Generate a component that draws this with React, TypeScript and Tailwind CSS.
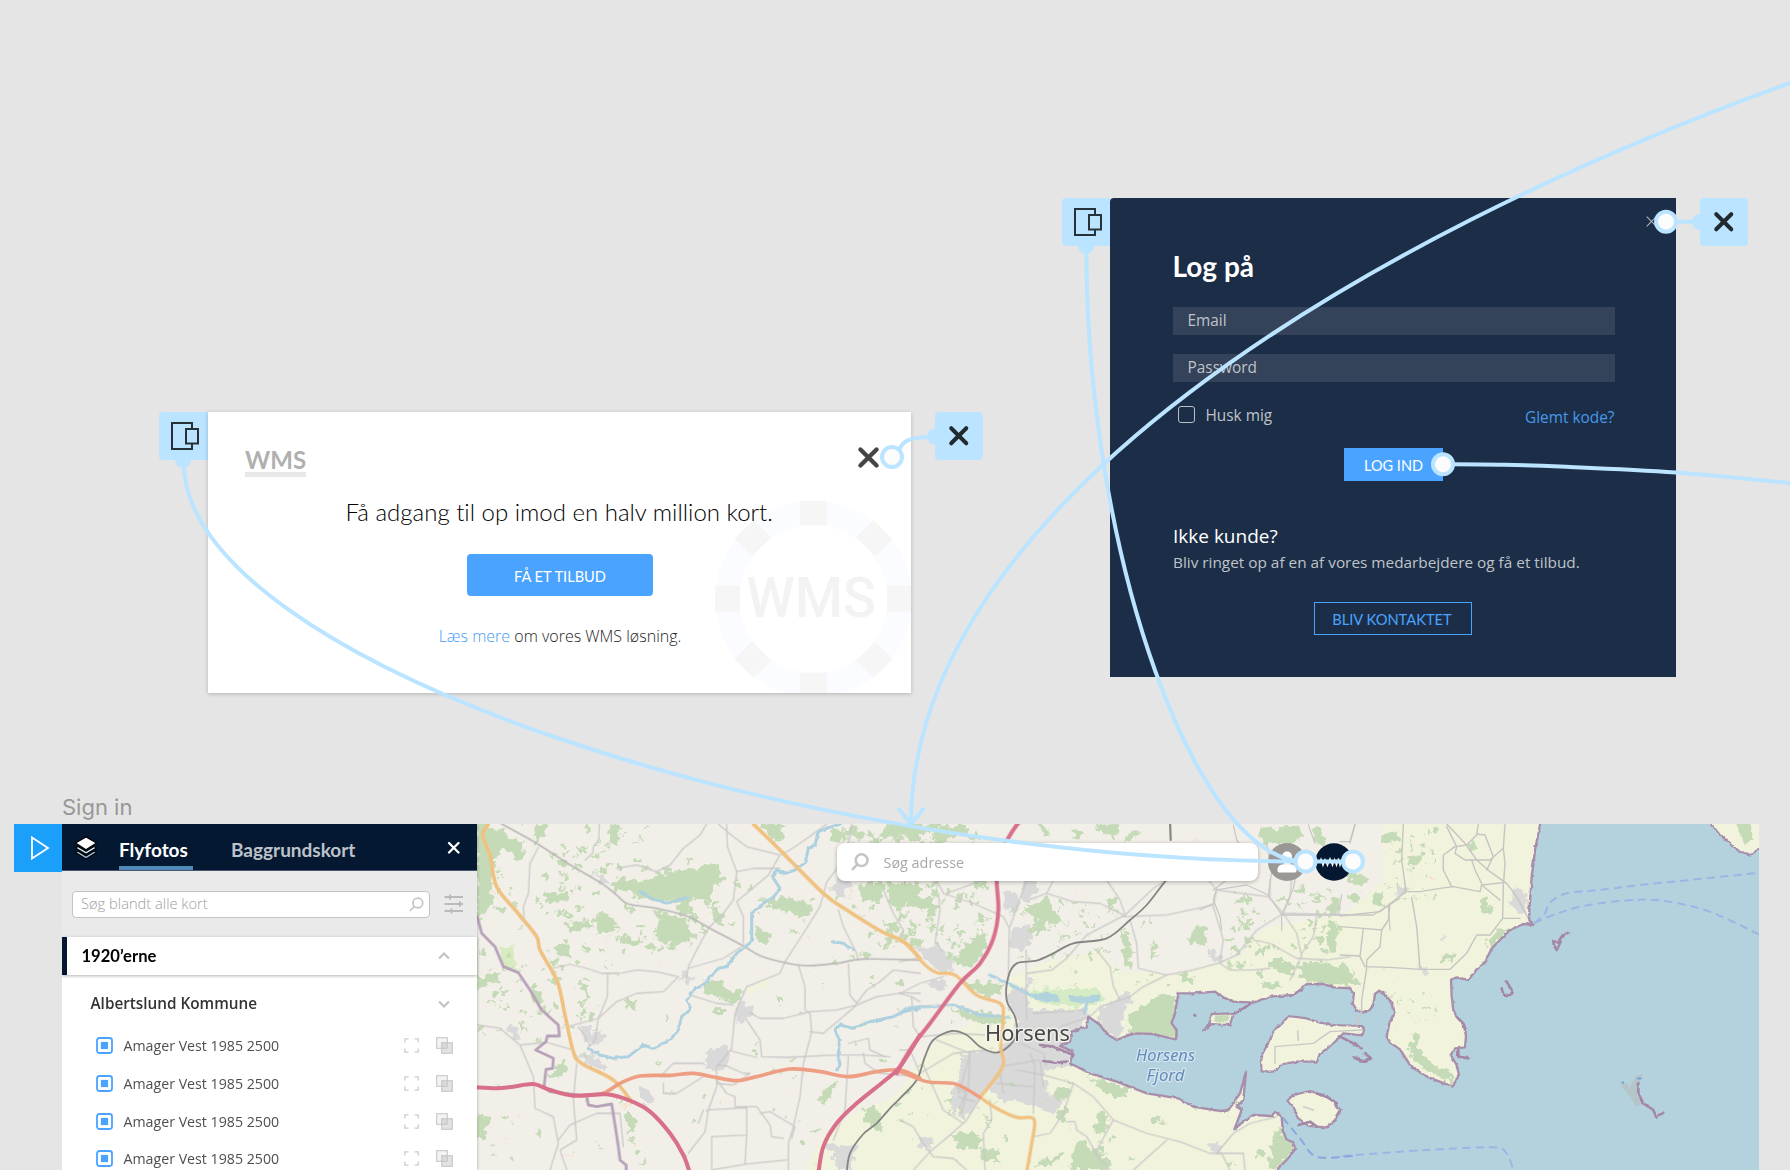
import React from "react";

type Pt = [number, number];

/** Parses "x,y x,y ..." into points. */
const pts = (s: string): Pt[] => s.trim().split(/\s+/).map((p) => p.split(",").map(Number) as Pt);

/** Smooth open curve through all the points. */
function curve(s: string): string {
  const p = pts(s);
  let d = `M${p[0][0]} ${p[0][1]}`;
  for (let i = 0; i < p.length - 1; i++) {
    const a = p[i - 1] ?? p[i];
    const b = p[i];
    const c = p[i + 1];
    const e = p[i + 2] ?? c;
    d += `C${b[0] + (c[0] - a[0]) / 6} ${b[1] + (c[1] - a[1]) / 6} ${c[0] - (e[0] - b[0]) / 6} ${c[1] - (e[1] - b[1]) / 6} ${c[0]} ${c[1]}`;
  }
  return d;
}

/* ---------- map data: three survey tiles, three units to a pixel ---------- */

const WEST = "translate(470 810) scale(.33333)";
const MID = "translate(900 880) scale(.33333)";
const EAST = "translate(1340 810) scale(.33333)";
const NORTH = "translate(1200 800) scale(.33333)";

const SEA =
  "-755,620 -720,645 -700,672 -670,690 -650,682 -620,670 -560,672 -530,680 -492,688 -490,660 -505,640 -495,610 -485,550 -440,550 -375,545 -350,562 -320,575 -260,578 -210,560 -140,555 -120,540 -100,522 -50,522 -20,532 30,535 42,550 38,580 50,600 65,607 85,605 100,585 105,552 118,542 140,560 158,580 163,608 148,640 140,680 150,697 180,718 212,768 260,800 338,830 357,795 350,765 332,735 345,715 375,712 378,680 372,645 350,620 340,600 335,560 333,510 350,502 385,510 410,478 435,458 455,415 480,390 510,360 550,342 580,345 568,330 568,300 572,250 575,200 582,150 585,120 605,20 1280,20 1280,1120 -215,1120 -190,1080 -160,1050 -132,1015 -145,995 -160,990 -172,960 -175,920 -195,905 -205,918 -260,915 -290,935 -317,958 -295,900 -310,890 -290,870 -282,785 -300,850 -335,900 -360,903 -440,890 -485,865 -580,850 -670,815 -750,790 -810,760 -800,725 -840,708 -810,695 -805,665 -760,650";

const FARM =
  "330,290 430,250 600,210 650,270 700,275 830,285 900,262 1030,225 1060,170 1100,140 1300,110 1340,100 1450,0 1450,-170 2580,-170 2580,880 -290,880 -250,800 -200,740 -110,690 0,640 60,540 120,470 220,430 310,420 320,340";

const ISLANDS_MID = [
  "1165,408 1220,415 1260,428 1300,435 1385,438 1392,450 1388,466 1330,460 1290,500 1260,520 1250,545 1190,545 1150,552 1120,575 1085,575 1083,545 1088,520 1105,490 1120,455 1145,432",
  "1162,662 1180,645 1230,633 1290,655 1322,690 1305,720 1280,742 1225,738 1195,715 1185,690",
  "935,402 1000,400 990,435 935,432 912,452 930,425",
];

const FOREST_WEST = [
  "22,42 55,42 70,75 100,85 135,100 130,125 95,120 75,160 60,250 75,260 50,300 30,330 22,330",
  "50,50 100,60 130,90 160,95 165,130 140,150 120,120 80,120 60,90",
  "200,42 230,42 222,80 205,100 190,90",
  "415,42 445,42 448,95 430,105 415,80",
  "430,215 470,205 510,215 560,195 640,180 750,165 750,200 765,210 730,235 720,270 665,265 662,300 650,315 625,308 622,272 560,275 510,262 470,240 430,240",
  "545,300 600,308 655,330 650,350 678,375 660,395 615,400 560,395 560,350 575,335",
  "385,310 410,315 437,330 430,370 405,365 375,375",
  "865,42 945,42 930,60 945,85 920,100 900,80",
  "730,505 760,520 768,540 820,545 805,580 745,565 697,550 705,520",
  "880,275 930,262 985,270 1025,285 1020,315 990,325 950,300 900,295",
  "855,345 875,360 900,370 890,400 860,395",
  "1160,225 1230,215 1245,235 1225,280 1200,270 1180,280 1170,250",
  "1250,215 1350,215 1350,300 1310,275 1285,310 1260,270",
  "255,770 285,750 292,785 262,805 240,795",
  "22,910 55,915 60,950 40,970 45,985 22,975",
  "1180,895 1215,885 1225,910 1240,970 1215,960 1185,930",
  "1040,870 1080,820 1110,810 1095,835 1065,885",
  "470,905 495,920 500,955 480,970 465,940",
  "22,500 60,490 90,490 80,510 40,530 22,540",
  "220,250 260,245 290,262 265,275 230,272",
  "250,410 290,400 310,440 290,445 260,430",
  "440,380 500,385 520,400 480,410 450,400",
  "1250,42 1350,42 1350,95 1310,80 1280,75 1230,90",
  "720,290 760,310 760,350 740,345",
  "190,530 215,545 220,590 240,620 215,600 190,570",
  "320,510 350,525 360,560 345,585 340,540",
  "1080,60 1120,60 1110,95 1080,90",
  "465,570 500,570 498,590 470,595",
  "720,600 770,590 765,605 725,608",
  "1350,160 1420,150 1500,140 1480,190 1400,200",
  "280,345 320,335 350,330 370,350 330,362 295,360",
  "1240,340 1275,335 1290,360 1250,370",
];

const FOREST_MID = [
  "370,100 400,70 440,50 465,85 470,110 490,125 440,135 420,165 400,155 410,115",
  "180,210 250,150 260,180 250,225 225,250 185,260 160,240",
  "190,310 250,305 310,310 305,345 250,345 210,330",
  "685,410 720,380 770,350 830,345 820,420 830,470 780,468 690,460",
  "660,140 680,160 695,210 695,270 670,250 665,180",
  "865,175 890,135 915,145 918,195 880,190",
  "1290,120 1310,130 1305,220 1285,215",
  "1190,250 1250,245 1345,270 1340,315 1280,310 1230,305 1200,290",
  "1110,240 1150,240 1190,260 1180,290 1150,280 1100,260",
  "455,640 490,620 515,630 500,655 460,655",
  "560,590 620,605 695,625 680,645 640,650 600,625",
  "590,695 625,700 615,755 580,750",
  "545,780 570,800 590,810 630,845 625,870 510,870 515,820",
  "155,765 200,752 245,775 230,805 180,808",
  "245,810 290,805 300,850 240,838",
  "1120,760 1140,745 1185,805 1130,870 1105,868",
  "940,405 992,405 982,428 940,428",
  "150,385 230,395 310,405 320,430 250,430 200,420",
  "470,700 500,680 510,700 480,730",
  "1070,810 1090,810 1090,835 1068,830",
  "400,860 440,835 480,830 450,855",
  "755,190 765,185 770,235 755,225",
  "830,285 860,278 885,300 860,308",
  "620,55 650,55 650,75 625,75",
  "-20,10 30,5 60,40 90,80 60,95 30,60 0,70",
  "60,60 100,50 120,90 90,105",
  "0,90 20,100 10,125 -10,120",
  "1080,315 1130,310 1150,325 1110,330",
];

const FOREST_NORTH = [
  "175,85 215,80 235,95 255,78 305,80 305,110 270,130 190,130 180,110",
  "335,80 365,85 380,130 360,145 345,115",
  "400,295 420,290 415,320 425,335 390,340 375,330",
  "460,280 480,290 470,305 448,305",
  "130,292 160,295 150,310 132,305",
  "430,210 470,215 505,240 480,260 440,245",
  "-800,75 -770,80 -700,72 -690,100 -740,110 -790,130",
  "-480,78 -460,78 -450,105 -470,110",
  "-320,75 -240,72 -240,90 -260,115 -300,95",
  "-210,95 -180,90 -195,115 -230,130",
  "-385,85 -365,90 -350,105 -375,115",
  "-700,110 -670,95 -650,110 -680,125",
];

const FOREST_EAST = [
  "125,70 180,68 180,95 130,98",
  "15,200 50,195 85,205 80,225 40,220",
  "440,410 445,385 480,355 515,350 490,375 465,410",
  "220,680 240,675 232,710 245,735 290,770 340,790 340,812 300,805 235,765 205,725",
  "95,250 130,250 130,290 100,285",
  "30,255 60,245 45,280 30,275",
  "420,270 440,265 445,290 465,290 440,312 425,305",
  "300,440 350,425 350,445 320,455 300,458",
  "385,100 405,95 408,120 390,118",
  "200,145 240,135 245,155 210,165",
  "8,450 35,490 60,520 20,530 0,500",
];

const URBAN_WEST = [
  "330,645 355,650 365,680 395,660 410,685 375,705 345,690",
  "100,655 125,645 150,670 145,690",
  "320,730 370,735 410,765 405,785 340,755",
  "715,720 760,705 780,720 770,770 740,790 705,775",
  "790,600 820,575 850,600 830,630 805,640",
  "625,500 650,485 670,510 655,525",
  "510,830 540,840 550,880 530,880 510,860",
  "1080,230 1115,190 1150,220 1110,265",
  "360,190 410,205 420,235 395,220",
  "1065,1000 1160,1010 1145,1080 1110,1080",
];

const URBAN_MID = [
  "330,330 380,320 385,390 560,390 570,420 520,455 480,480 530,520 500,560 430,570 440,640 500,650 460,700 380,670 300,660 270,620 240,660 190,720 160,690 155,640 180,600 180,520 290,510 340,470 350,420 325,380",
  "600,390 680,335 700,350 670,395 670,465 640,480 590,430",
  "370,0 410,0 412,40 380,65 360,50",
  "305,35 350,35 360,80 330,105 310,70",
  "335,150 390,130 400,185 370,210 330,200",
  "40,200 110,200 165,240 160,270 110,270 60,225",
  "80,310 130,295 140,325 100,330",
  "925,195 950,225 975,245 935,245",
  "55,770 95,775 90,815 60,800",
  "925,790 970,790 960,820 930,815",
  "385,285 402,290 400,320 380,315",
];

const URBAN_EAST = ["520,240 550,235 560,300 540,320 515,290", "230,465 270,475 250,500", "160,240 200,225 200,250 170,258", "300,385 320,375 315,395"];

const MINOR_WEST = [
  "22,645 90,655 150,705 230,697 310,720",
  "205,112 180,160 175,250 160,290 162,325",
  "388,42 386,90 370,110 368,130 345,150",
  "440,175 500,165 560,185 600,165 640,115 690,75 710,42",
  "770,42 772,110 800,185 790,270 760,310 715,355 680,420 655,470 650,500",
  "745,42 790,80 830,110 930,135 895,195 800,275 820,320 820,400",
  "935,135 990,100 1070,42",
  "800,185 850,175 930,175",
  "245,475 300,463 350,475 395,490 450,490 500,480 560,485 625,500 580,545 500,550 440,575 385,625 300,648",
  "413,490 412,560 385,625 375,690 358,710",
  "325,650 358,700 355,720",
  "655,475 760,445 815,410",
  "1145,42 1130,140 1070,215 1050,290 1000,370 945,455 930,490 830,530 795,610 785,715 740,770 740,830 715,900 705,965 655,1030",
  "660,555 740,580 790,585",
  "830,630 870,690 875,740 950,742 1100,735 1180,735 1260,740",
  "780,722 860,742",
  "840,608 870,625 940,625 1020,605 1100,600 1160,585 1220,560 1300,548 1350,550",
  "985,465 1005,530 1005,600 1020,610 1025,665 1000,760 990,860 970,950 955,1000 955,1080",
  "1135,462 1140,555 1160,580 1190,540 1230,515 1270,480 1350,490",
  "1020,665 1060,670 1160,585",
  "740,765 770,768 820,790 840,790 790,825 740,820",
  "600,800 570,800 610,760 700,760",
  "740,810 770,850 795,860 795,890 860,890 900,945 905,980 940,985",
  "710,900 830,893 830,975 725,980 725,1080 830,1062 950,1050",
  "830,975 825,1060",
  "870,910 900,905 975,950 965,985",
  "150,705 190,800 195,895 250,920 265,1000 240,1080",
  "320,760 310,870 320,990 270,1020 290,1080",
  "265,990 300,945 380,910 450,910 460,1010",
  "580,820 580,850 620,850 700,800",
  "520,880 580,950 650,1040",
  "700,900 685,940",
  "1135,740 1125,900 1090,990",
  "1180,730 1185,760 1230,790 1350,800",
  "1240,240 1270,310 1300,360 1290,380",
  "1105,300 1120,350 1160,430 1165,450",
  "1245,740 1200,720 1195,685 1135,700",
];

const MINOR_MID = [
  "110,0 130,40 220,70 310,110 328,145 325,300",
  "380,0 355,70 330,140",
  "140,40 250,0",
  "115,40 120,90 105,190 130,215",
  "460,0 440,40 385,60",
  "440,40 520,65 600,70 670,105",
  "620,0 660,60 675,105 760,25 800,0",
  "675,105 560,165 500,235 455,270 380,280",
  "670,110 800,105 940,75",
  "690,120 710,190 715,265 800,285",
  "590,210 630,260 640,320 660,360",
  "925,0 950,30 1105,50 1150,100 1350,105",
  "950,30 940,80 970,180 960,240",
  "1110,0 1110,50",
  "1175,0 1170,50 1150,100 1070,150 1010,225 960,248 880,270 800,285 730,320 690,350 600,380 570,410 480,440",
  "960,250 990,270 1060,270 1110,265",
  "1060,180 1110,190 1190,235 1280,240 1350,230",
  "1150,100 1190,160 1205,230 1170,300",
  "1250,110 1240,170 1205,220",
  "378,210 380,420",
  "0,245 50,235",
  "0,340 60,310 130,290",
  "35,350 40,440 60,470 170,460 255,465",
  "60,365 35,350 0,340",
  "0,510 30,510 60,580 160,520 260,510",
  "350,570 430,585 520,610 580,650 640,720 740,760 840,785 930,820 965,820 990,870",
  "520,610 490,700 450,760 400,770",
  "640,720 585,820 630,870",
  "700,870 800,780",
  "390,520 405,560 400,700",
  "350,485 430,520 440,560",
  "110,480 210,520 205,620 180,680",
  "210,520 200,560 175,640",
  "240,655 200,720 150,765 90,815 40,870",
  "70,555 90,600 130,690 190,730",
  "270,660 275,720 250,760 255,870",
  "0,720 40,740 70,790 100,830 160,835 200,870",
  "500,725 525,725 530,750 560,770 600,840",
  "950,820 1000,760 1050,730 1130,710",
  "960,820 1030,820 1035,870",
  "400,400 560,390",
  "300,560 420,540 430,620",
  "290,610 400,620",
  "300,580 310,640",
  "165,620 200,640 185,700",
  "175,650 225,665",
];

const MINOR_NORTH = [
  "40,270 100,225 150,170 110,120 100,75",
  "50,270 140,255 205,285 245,345 340,345 520,345 600,295",
  "50,265 40,300 60,350 65,390",
  "0,330 40,310",
  "205,285 215,215 200,130",
  "290,215 280,265 245,345 245,390",
  "325,75 345,130",
  "465,75 450,130",
  "425,285 415,345",
  "565,320 570,390",
];

const MINOR_EAST = [
  "190,42 185,150 198,245 120,305 0,318",
  "198,245 240,245 300,235 340,230 420,245 425,225 490,218",
  "215,262 230,350 240,475",
  "320,42 375,100 410,150 450,185 500,220 530,260 570,335",
  "415,42 410,72 435,75 460,140 440,180",
  "410,75 380,105 345,110 310,135 310,180 335,230",
  "320,50 350,110 345,130 375,150 450,150 490,115 495,42",
  "490,115 495,160 490,230 488,325 540,325",
  "425,225 480,270",
  "395,150 405,180 425,220",
  "488,325 450,375 410,375 380,430 330,478 240,478 150,472 75,470 60,440 70,355 0,350",
  "70,355 125,360 120,410 80,450 80,475 65,570 65,605",
  "150,280 145,330 125,360",
  "45,42 30,95 0,95",
  "0,435 60,438",
];

const COAST_BITS = [
  "640,395 655,395 665,380 685,368",
  "640,400 650,420 662,395",
  "485,535 490,555 515,555 515,540 500,515",
  "895,820 895,850 910,880 940,900 948,920 970,908",
  "350,620 370,640 375,655",
  "355,720 355,740 385,745",
  "0,680 40,700 65,715",
  "40,742 70,755 92,745 75,730",
  "-437,615 -434,617",
  "-320,610 -290,595 -270,582",
  "-70,850 -40,860 -10,880",
  "-125,945 -90,935 -70,950",
  "-900,705 -860,710 -800,735",
  "-890,753 -850,758 -820,755",
];

/** Deterministic scatter of small irregular woodland patches. */
function scatter(seed: number, n: number, x0: number, y0: number, x1: number, y1: number, size: number) {
  let s = seed;
  const rnd = () => {
    s = (s * 16807) % 2147483647;
    return s / 2147483647;
  };
  let d = "";
  for (let i = 0; i < n; i++) {
    const cx = x0 + rnd() * (x1 - x0);
    const cy = y0 + rnd() * (y1 - y0);
    const r = size * (0.3 + rnd() * 0.7);
    for (let k = 0; k < 7; k++) {
      const a = (k / 7) * Math.PI * 2;
      const q = r * (0.35 + rnd() * 0.8);
      d += `${k ? "L" : "M"}${(cx + Math.cos(a) * q * 1.2).toFixed(1)} ${(cy + Math.sin(a) * q).toFixed(1)}`;
    }
    d += "Z";
  }
  return d;
}

const FLECKS = [
  scatter(11, 70, 480, 825, 650, 940, 4.5),
  scatter(23, 45, 560, 860, 720, 950, 5),
  scatter(37, 60, 480, 950, 600, 1040, 4),
  scatter(53, 30, 730, 880, 960, 960, 4.5),
  scatter(71, 85, 860, 860, 990, 950, 4.8),
  scatter(83, 50, 600, 960, 960, 1165, 3.2),
  scatter(97, 55, 840, 825, 940, 880, 5.5),
  scatter(101, 40, 900, 1080, 1250, 1165, 4),
  scatter(131, 26, 1040, 900, 1180, 985, 3.5),
  scatter(151, 70, 1230, 890, 1345, 975, 4.5),
  scatter(173, 50, 1385, 830, 1440, 900, 2.6),
  scatter(191, 26, 1385, 985, 1450, 1050, 2.4),
  scatter(211, 14, 480, 1050, 640, 1165, 4),
  scatter(233, 40, 1010, 905, 1110, 960, 3),
].join("");

const PEACH = scatter(307, 70, 490, 830, 1500, 990, 1.5) + scatter(331, 40, 480, 1080, 1240, 1165, 1.5);

function Polys({ items, t, fill }: { items: string[]; t: string; fill: string }) {
  return (
    <g transform={t} fill={fill}>
      {items.map((p, i) => (
        <polygon key={i} points={p} />
      ))}
    </g>
  );
}

function Lines({ items, t, color, w }: { items: string[]; t: string; color: string; w: number }) {
  return (
    <g transform={t} fill="none" stroke={color} strokeWidth={w} strokeLinecap="round" strokeLinejoin="round">
      {items.map((p, i) => (
        <polyline key={i} points={p} />
      ))}
    </g>
  );
}

function Curves({ items, t, color, w, dash }: { items: string[]; t: string; color: string; w: number; dash?: string }) {
  return (
    <g transform={t} fill="none" stroke={color} strokeWidth={w} strokeLinecap="round" strokeDasharray={dash}>
      {items.map((p, i) => (
        <path key={i} d={curve(p)} />
      ))}
    </g>
  );
}

function TerrainMap() {
  return (
    <svg className="absolute inset-0 h-full w-full" viewBox="477 824 1282 346" preserveAspectRatio="none" aria-hidden="true">
      <defs>
        <filter id="rough" filterUnits="userSpaceOnUse" x="470" y="815" width="1300" height="365">
          <feTurbulence type="fractalNoise" baseFrequency="0.16" numOctaves="2" seed="7" />
          <feDisplacementMap in="SourceGraphic" scale="12" xChannelSelector="R" yChannelSelector="G" />
        </filter>
        <filter id="ragged" filterUnits="userSpaceOnUse" x="470" y="815" width="1300" height="365">
          <feTurbulence type="fractalNoise" baseFrequency="0.2" numOctaves="2" seed="3" />
          <feDisplacementMap in="SourceGraphic" scale="3" xChannelSelector="R" yChannelSelector="G" />
        </filter>
      </defs>
      <rect x="477" y="824" width="1282" height="346" fill="#f2efe9" />
      <Polys items={[FARM]} t={MID} fill="#f1f3dd" />
      <g filter="url(#rough)">
        <path d={PEACH} fill="#f8dcc4" />
        <Polys items={["90,410 130,405 145,480 100,470"]} t={WEST} fill="#d8ebc0" />
        <Polys items={["1290,830 1350,830 1350,1080 1170,1080 1200,1000", "820,540 895,505 890,530 840,555"]} t={WEST} fill="#f1f3dd" />
        <Polys items={["385,330 440,325 600,330 610,365 520,380 400,360", "730,410 790,420 800,455 735,450"]} t={MID} fill="#d5ebc3" />
        <Polys items={URBAN_WEST} t={WEST} fill="#dad9d9" />
        <Polys items={URBAN_MID} t={MID} fill="#dad9d9" />
        <Polys items={URBAN_EAST} t={EAST} fill="#dad9d9" />
        <path d={FLECKS} fill="#c5dab6" />
        <Polys items={FOREST_WEST} t={WEST} fill="#c5dab6" />
        <Polys items={FOREST_MID} t={MID} fill="#c5dab6" />
        <Polys items={FOREST_EAST} t={EAST} fill="#c5dab6" />
        <Polys items={FOREST_NORTH} t={NORTH} fill="#c5dab6" />
      </g>
      <g filter="url(#ragged)">
        <Polys items={["390,342 440,338 475,345 480,365 440,368 400,355", "505,345 560,350 600,342 600,362 550,372 510,362"]} t={MID} fill="#b0d3dd" />
      </g>

      <Lines items={MINOR_WEST} t={WEST} color="#c9c8c7" w={3.8} />
      <Lines items={MINOR_MID} t={MID} color="#c9c8c7" w={3.8} />
      <Lines items={MINOR_NORTH} t={NORTH} color="#c9c8c7" w={3.8} />
      <Lines items={MINOR_EAST} t={EAST} color="#c5c5c1" w={4.2} />
      <Curves items={["95,42 200,100 290,158 395,220 440,255 475,282 560,295 650,318 720,355 815,405 870,437 945,458 1010,467 1100,460 1180,447 1350,450"]} t={WEST} color="#b9b8b7" w={5} />

      <g filter="url(#ragged)">
        <g transform={EAST} stroke="#a88eab" strokeWidth="7" strokeLinejoin="round">
          <polygon points={SEA} fill="#b3d2dd" />
        </g>
        <g transform={MID} stroke="#a88eab" strokeWidth="6.5" strokeLinejoin="round" fill="#f1f3dd">
          {ISLANDS_MID.map((p, i) => (
            <polygon key={i} points={p} />
          ))}
        </g>
        <Polys items={["945,406 990,406 983,427 943,427"]} t={MID} fill="#c5dab6" />
        <g transform={EAST}>
          <polygon points="835,810 870,830 890,795 905,795 895,830 900,885 885,885" fill="#b5c4c8" />
          <polygon points="1100,24 1140,75 1200,125 1232,135 1275,102 1275,24" fill="#f1f3dd" stroke="#a88eab" strokeWidth="6" />
          <polygon points="1185,30 1230,30 1240,90 1215,105 1200,75" fill="#c5dab6" />
        </g>
        <Lines items={COAST_BITS} t={EAST} color="#a487a6" w={8} />
      </g>
      <g transform={EAST} fill="#5b9ee6">
        <rect x="892" y="803" width="12" height="5" />
        <rect x="846" y="815" width="6" height="5" />
      </g>
      <Lines items={["1125,550 1125,500 1240,490 1290,455 1385,450", "1193,452 1195,482", "1210,680 1240,690"]} t={MID} color="#c9c8c7" w={4} />
      <Lines items={["64,605 50,645"]} t={EAST} color="#c9c8c7" w={5} />

      {/* streams */}
      <g filter="url(#ragged)">
        <Lines
          items={[
            "1110,42 1070,55 1045,65 1035,105 1015,115 1005,160 975,180 945,190 920,180 907,200 930,235 910,262 880,280 845,310 845,395 800,430 770,470 745,475 700,525 670,540 650,570 662,595 635,620 625,660 600,690 550,715 520,705 475,740 430,745 390,735 355,715",
            "510,245 545,265 590,280 655,262",
            "1350,595 1300,605 1270,620 1200,635 1150,655 1110,645 1095,660 1108,690 1105,740 1110,765 1100,780",
            "1090,395 1120,400 1150,420",
          ]}
          t={WEST}
          color="#aed1df"
          w={9}
        />
        <Lines items={["0,400 20,385 60,380 100,380 160,375 240,405 330,412", "270,285 300,300 330,312 390,345", "560,370 552,400"]} t={MID} color="#aed1df" w={9} />
      </g>

      {/* municipal border */}
      <Lines
        items={[
          "22,320 35,370 75,410 100,470 145,488 180,540 215,600 265,645 268,678 232,678 228,695 197,720 250,745 248,775 228,778 222,830 240,845 350,858 355,885 380,890 425,882 435,945 445,1010 450,1050 468,1065 468,1080",
        ]}
        t={WEST}
        color="#b7a3b9"
        w={8.5}
      />

      {/* railway */}
      <Curves items={["812,-10 795,5 740,75 690,120 620,175 520,190 460,220 410,242 350,250 325,290 320,360 345,410 350,460 330,495 290,518 240,500 200,465 155,453 100,480 75,530 50,600 0,655 -30,685 -70,730 -110,762 -150,820 -160,880"]} t={MID} color="#858684" w={5.5} />
      <Curves items={["980,32 982,90"]} t="translate(820 810) scale(.35714 .33333)" color="#858684" w={6} />

      {/* primary roads */}
      <Curves items={["55,42 38,75 60,135 80,230 140,305 200,380 210,420 262,515 285,615 310,725 335,760 430,810 485,875", "850,42 930,120 1060,250 1130,300 1230,362 1300,395 1350,445"]} t={WEST} color="#efc282" w={11} />
      <Curves items={["0,178 30,200 70,250 110,278 165,285 230,345 300,370 310,410 302,500 308,560 240,652", "240,652 290,685 350,712 402,718 395,790 380,875"]} t={MID} color="#efc282" w={10} />
      <Curves items={["330,858 400,850 450,820 510,798 600,796 670,790 740,803 800,812 860,800 960,777 1050,785 1135,800 1220,785 1290,780 1350,805"]} t={WEST} color="#ee9e82" w={11} />
      <Curves items={["0,575 80,605 160,610 200,628 240,652"]} t={MID} color="#ee9e82" w={10} />

      {/* motorway */}
      <Curves items={["15,832 80,835 130,830 190,822 240,840 310,857 410,853 480,872 540,905 600,970 640,1035 660,1090", "1045,1090 1060,1010 1100,940 1160,880 1240,815 1290,770 1350,675"]} t={WEST} color="#d9708a" w={12} />
      <Curves items={["-10,580 0,560 40,495 90,430 180,310 240,250 280,175 295,90 290,-20 312,-100 350,-165 370,-180"]} t={MID} color="#d9708a" w={12} />

      {/* ferry lines */}
      <Curves items={["585,338 615,310 630,278 680,250 780,240 900,225 1050,210 1260,188", "585,338 640,315 730,288 850,272 950,270 1060,290 1150,322 1260,375", "10,1038 180,1025 300,1018 460,1012 500,1030 520,1080"]} t={EAST} color="#9db4e4" w={6} dash="20 20" />
      <Curves items={["1150,715 1200,775 1250,830 1360,828"]} t={MID} color="#8aa6e0" w={6} dash="20 20" />

      <g fontFamily='"Noto Sans", sans-serif' strokeLinejoin="round" style={{ paintOrder: "stroke" }}>
        <text x="985" y="1041.3" fontSize="22.4" textLength="85" lengthAdjust="spacingAndGlyphs" fill="#474747" stroke="#f5f5f0" strokeOpacity=".75" strokeWidth="3">
          Horsens
        </text>
        <g fontStyle="italic" fontSize="15.4" fill="#6489bd" stroke="#dcebf0" strokeOpacity=".8" strokeWidth="2.4">
          <text x="1136" y="1061.4" textLength="59" lengthAdjust="spacingAndGlyphs">
            Horsens
          </text>
          <text x="1146.5" y="1081.4" textLength="38" lengthAdjust="spacingAndGlyphs">
            Fjord
          </text>
        </g>
      </g>
    </svg>
  );
}

/* ------------------------------ icons ------------------------------ */

function Cross({ size, w, color }: { size: number; w: number; color: string }) {
  return (
    <svg width={size} height={size} viewBox="0 0 20 20" fill="none" stroke={color} strokeWidth={w} strokeLinecap="round" className="block shrink-0">
      <path d="M3 3L17 17M17 3L3 17" />
    </svg>
  );
}

function Magnifier({ size, w }: { size: number; w: number }) {
  return (
    <svg width={size} height={size} viewBox="0 0 18 18" fill="none" stroke="#c4c4c4" strokeWidth={w} className="block shrink-0">
      <circle cx="10.6" cy="7.2" r="5.9" />
      <path d="M6.4 11.4L1 16.8" />
    </svg>
  );
}

function OverlayTag({ className }: { className: string }) {
  return (
    <div className={`${className} flex h-12 items-center justify-start rounded-l bg-[#bae4ff]`}>
      <svg width="48" height="57" viewBox="0 0 48 57" fill="none" className="mt-[9px] block shrink-0">
        <circle cx="24" cy="48" r="8" fill="#bae4ff" />
        <g stroke="#263238" strokeWidth="2">
          <path d="M33 16V11H13V37H33V32" />
          <rect x="27" y="17" width="12" height="14.5" />
        </g>
      </svg>
    </div>
  );
}

function CloseTag({ className }: { className: string }) {
  return (
    <div className={`${className} flex h-12 w-12 items-center justify-center rounded bg-[#bae4ff]`}>
      <Cross size={21.5} w={3.7} color="#22292f" />
    </div>
  );
}

function LayersIcon() {
  return (
    <svg width="24" height="24" viewBox="0 0 24 24" stroke="#000" strokeWidth="1.1" strokeLinejoin="round" className="block shrink-0">
      <path d="M1.5 16.5L12 23L22.5 16.5L20 15L12 20L4 15Z" fill="#9cc0e2" />
      <path d="M1.5 12L12 18.3L22.5 12L20 10.5L12 15.4L4 10.5Z" fill="#d9ebfb" />
      <path d="M1.5 7L12 1L22.5 7L12 13.6Z" fill="#fff" />
    </svg>
  );
}

function SlidersIcon() {
  return (
    <svg width="20" height="20" viewBox="0 0 20 20" stroke="#bababa" strokeWidth="2" className="block shrink-0">
      <path d="M.5 3H19M.5 10H19M.5 17H19M6 .5V5.5M16 7.5V12.5M7.5 14.5V19.5" />
    </svg>
  );
}

function Chevron({ up }: { up?: boolean }) {
  return (
    <svg width="12" height="8" viewBox="0 0 12 8" fill="none" stroke="#c4c4c4" strokeWidth="2.2" className="block shrink-0">
      <path d={up ? "M1 6.5L6 1.5L11 6.5" : "M1 1.5L6 6.5L11 1.5"} />
    </svg>
  );
}

function LayerRow() {
  return (
    <div className="flex h-[37.7px] items-center pl-[34.3px] pr-[24px]">
      <svg width="17" height="17" viewBox="0 0 17 17" className="block shrink-0">
        <rect x="1" y="1" width="15" height="15" rx="2.4" fill="#fff" stroke="#4aa4ff" strokeWidth="1.8" />
        <rect x="4.9" y="4.9" width="7.2" height="7.2" fill="#4aa4ff" />
      </svg>
      <span className="ml-[10.2px] mt-[1px] whitespace-nowrap text-[14.2px] leading-5 text-[#4f4f4f]">Amager Vest 1985 2500</span>
      <svg width="15" height="15" viewBox="0 0 15 15" fill="none" stroke="#cdcdcd" strokeWidth="1.3" className="ml-auto block shrink-0">
        <path d="M.8 4.5V.8H4.5M10.5 .8H14.2V4.5M14.2 10.5V14.2H10.5M4.5 14.2H.8V10.5" />
      </svg>
      <svg width="17" height="17" viewBox="0 0 17 17" stroke="#c4c4c4" className="ml-[17px] block shrink-0">
        <rect x=".7" y=".7" width="10.6" height="10.6" fill="#f3f3f3" />
        <rect x="5.7" y="5.7" width="10.6" height="10.6" fill="#e2e2e2" />
        <path d="M6 8L8 6M6 11L11 6M8.5 11L11 8.5" fill="none" strokeWidth=".8" />
        <path d="M5.7 11.3H11.3V5.7" fill="none" />
      </svg>
    </div>
  );
}

/* ------------------------------ frames ------------------------------ */

function Watermark() {
  return (
    <svg className="absolute left-[507px] top-[88px] block" width="196.5" height="193" viewBox="-98.5 -99 196.5 193" fill="none" aria-hidden="true">
      <circle r="86" stroke="#fafcff" strokeWidth="24.5" />
      {[0, 45, 90, 135, 180, 225, 270, 315].map((a) => (
        <rect key={a} x="-13.5" y="-98.3" width="27" height="24.6" fill="#f6f6f6" transform={`rotate(${a})`} />
      ))}
      <text x="-2.3" y="18" textAnchor="middle" textLength="130" lengthAdjust="spacingAndGlyphs" fontFamily="Roboto, sans-serif" fontWeight="500" fontSize="56" fill="#f3f3f3">
        WMS
      </text>
    </svg>
  );
}

function OfferCard() {
  return (
    <section className="absolute left-[207.5px] top-[412px] h-[281px] w-[703.5px] bg-white shadow-[0_1px_4px_rgba(0,0,0,0.22)]">
      <Watermark />
      <div className="relative flex h-full flex-col items-center">
        <header className="flex w-full items-start justify-between pl-[37.5px] pr-[31px] pt-[33.5px]">
          <span className="h-[31px] w-[61px] border-b-[5px] border-[#e8e8e8] text-[24px] font-bold leading-7 text-[#b0b0b0]">WMS</span>
          <Cross size={23} w={3.8} color="#454545" />
        </header>
        <h2 className="mt-[21px] whitespace-nowrap text-[24px] font-light leading-7 text-black [font-variant-ligatures:none]">Få adgang til op imod en halv million kort.</h2>
        <button className="ml-[1.5px] mt-[28px] h-[42px] w-[186px] rounded bg-[#4aa4ff] pt-[5px] text-[14.6px] text-white">FÅ ET TILBUD</button>
        <p className="mt-[28px] whitespace-nowrap pl-[1.5px] font-['Open_Sans'] text-[16px] font-light leading-6 text-[#222]">
          <a className="text-[#3f9bf5]">Læs mere</a> om vores WMS løsning.
        </p>
      </div>
    </section>
  );
}

function LoginCard() {
  return (
    <section className="absolute left-[1110px] top-[198px] flex h-[478.5px] w-[566px] flex-col rounded-tl bg-[#1c2e47] pl-[62.5px] pr-[61.5px] font-['Open_Sans'] text-[#bfc3c9]">
      <div className="-mr-[43px] flex h-[47px] items-center justify-end">
        <Cross size={13} w={1.6} color="#b5b8bd" />
      </div>
      <h2 className="font-['Lato'] text-[28px] font-bold leading-[42px] text-white">Log på</h2>
      <div className="mt-[19.5px] h-[28px] bg-[#344359] pl-[15px] text-[15.4px] leading-[27px]">Email</div>
      <div className="mt-[19px] h-[28px] bg-[#344359] pl-[15px] text-[15.4px] leading-[27px]">Password</div>
      <div className="mt-[20px] flex items-center pl-[5.5px]">
        <span className="-mt-[2px] h-[17px] w-[17px] rounded-[3px] border-[1.5px] border-[#b9bdc4]" />
        <span className="ml-[10.5px] text-[15.4px] leading-6">Husk mig</span>
        <a className="ml-auto mt-1 text-[15.4px] leading-6 text-[#4797ea]">Glemt kode?</a>
      </div>
      <button className="ml-[171.5px] mt-[18.5px] h-[33px] w-[99px] bg-[#4aa4ff] pt-[2px] font-['Lato'] text-[14.5px] text-white">LOG IND</button>
      <h3 className="mt-[40px] pl-[0.5px] text-[19px] leading-[30px] text-white">Ikke kunde?</h3>
      <p className="-mt-[1px] whitespace-nowrap pl-[0.5px] text-[15.35px] leading-[24px]">Bliv ringet op af en af vores medarbejdere og få et tilbud.</p>
      <button className="ml-[141.5px] mt-[28px] h-[33px] w-[158px] whitespace-nowrap border border-[#4aa4ff] pr-[2px] pt-[1.5px] font-['Lato'] text-[14.7px] text-[#4aa4ff]">BLIV KONTAKTET</button>
    </section>
  );
}

function SidePanel() {
  return (
    <aside className="relative z-10 flex w-[415px] shrink-0 flex-col bg-white font-['Open_Sans'] shadow-[0_0_3px_rgba(0,0,0,0.3)]">
      <nav className="flex h-[47px] shrink-0 border-b border-[#48566b] bg-[#041832] pl-[12px] font-['Lato'] text-[19px] font-bold">
        <div className="pt-[11.5px]">
          <LayersIcon />
        </div>
        <span className="ml-[21px] w-[74px] border-b-4 border-[#5189b8] pt-[12.5px] leading-[26px] text-white">Flyfotos</span>
        <span className="ml-[38px] pt-[12.5px] leading-[26px] text-[#bcc2ca]">Baggrundskort</span>
        <span className="ml-auto pr-[17px] pt-[16.5px]">
          <Cross size={13.5} w={3.4} color="#fff" />
        </span>
      </nav>
      <div className="flex h-[66px] shrink-0 items-start bg-[#eaeaea] pl-[10px] pt-[19.5px]">
        <div className="flex h-[27.5px] w-[358px] items-center justify-between rounded border border-[#c3c3c3] bg-white pl-2 pr-[5px]">
          <span className="-mt-[3px] text-[14.7px] font-light leading-5 text-[#a0a0a0]">Søg blandt alle kort</span>
          <Magnifier size={15} w={2} />
        </div>
        <span className="ml-[14px] mt-[3.5px]">
          <SlidersIcon />
        </span>
      </div>
      <div className="flex h-[37.5px] shrink-0 items-center justify-between border-l-[5px] border-[#041832] pl-[14.5px] pr-[27px] font-['Lato'] text-[16.6px] font-bold text-black shadow-[0_1px_3px_rgba(0,0,0,0.3)]">
        <span className="mt-px">1920’erne</span>
        <Chevron up />
      </div>
      <div className="mt-[10.5px] flex h-[37px] shrink-0 items-center justify-between pl-[28.5px] pr-[27px] text-[15.3px] font-semibold text-[#333]">
        <span>Albertslund Kommune</span>
        <Chevron />
      </div>
      <div className="mt-[5px]">
        <LayerRow />
        <LayerRow />
        <LayerRow />
        <LayerRow />
      </div>
    </aside>
  );
}

function MapPane() {
  return (
    <main className="relative h-full flex-1">
      <TerrainMap />
      <div className="relative flex items-center pl-[360px] pt-[19px]">
        <div className="flex h-[37.5px] w-[421px] items-center rounded-lg bg-white pl-[14px] shadow-[0_1px_4px_rgba(0,0,0,0.3)]">
          <Magnifier size={18} w={2.5} />
          <span className="ml-[14.5px] mt-px font-['Open_Sans'] text-[14.4px] leading-5 text-[#a8a8a8]">Søg adresse</span>
        </div>
        <svg width="38" height="38" viewBox="0 0 38 38" className="ml-[9.5px] block">
          <circle cx="19" cy="19" r="19" fill="#999895" />
          <path d="M19 8.5C22.5 8.5 24 11 24 14C24 17.5 22.5 20 21.5 21.5H16.5C15.5 20 14 17.5 14 14C14 11 15.5 8.5 19 8.5Z" fill="#fff" />
          <path d="M9.5 26Q10 22 15 21.2H23Q28 22 28.5 26Q28.8 29.5 27 29.5H11Q9.2 29.5 9.5 26Z" fill="#fff" />
        </svg>
        <svg width="38" height="38" viewBox="0 0 38 38" className="ml-[9px] block">
          <circle cx="19" cy="19" r="18.7" fill="#041832" />
          <path d="M5 19L6 16L8 22.5L10 16.5L12.5 22.5L15 15.5L17.5 22.5L19.5 16.5L21.5 22.5L23.5 15.5L25 22.5L27 16.5" fill="none" stroke="#fff" strokeWidth="1.2" />
        </svg>
      </div>
    </main>
  );
}

function Connectors() {
  return (
    <svg className="pointer-events-none absolute inset-0 z-20 h-full w-full" viewBox="0 0 1790 1170" fill="none" stroke="#bae4ff" strokeWidth="4" aria-hidden="true">
      <path d="M183.5 461C183.5 665 805 861.5 1305 861.5" />
      <path d="M1086.3 246C1086.3 558 1197 861.5 1305 861.5" />
      <path d="M911 824C911 507 1360 237.8 1790 83L1800 79.4" />
      <path d="M898 808L911 824L924 808" />
      <path d={curve("1443,464.3 1500,464.7 1560,466.5 1676,472.5 1800,484")} />
      <path d="M1666 221.7H1695" />
      <path d="M899 451C902 441 909 437.5 930 437" />
      <path d="M1305 861.5H1353" />
      <g stroke="none" fill="#bae4ff">
        <circle cx="935" cy="436.5" r="8" />
        <circle cx="1700" cy="222" r="8" />
      </g>
      <g fill="#fcfcfd">
        <circle cx="892" cy="457" r="10" />
        <circle cx="1666" cy="221.7" r="10" />
        <circle cx="1443" cy="464.3" r="10" />
        <circle cx="1305.5" cy="861.5" r="10" />
        <circle cx="1353" cy="861.5" r="10" />
      </g>
    </svg>
  );
}

export default function App() {
  return (
    <div className="relative h-[1170px] w-[1790px] overflow-hidden bg-[#e5e5e5] font-['Lato']">
      <OverlayTag className="absolute left-[159px] top-[412px] w-[49px]" />
      <OfferCard />
      <CloseTag className="absolute left-[935px] top-[412px]" />

      <OverlayTag className="absolute left-[1062px] top-[198px] w-[48px]" />
      <LoginCard />
      <CloseTag className="absolute left-[1700px] top-[198px]" />

      <div className="absolute left-[62px] top-[793px] font-['Inter'] text-[22px] leading-7 text-[#979797]">Sign in</div>
      <div className="absolute left-[14px] top-[824px] flex h-[48px] w-[49px] items-center justify-center bg-[#1aa0fb]">
        <svg width="20" height="24" viewBox="0 0 20 24" fill="none" stroke="#fff" strokeWidth="1.8" className="ml-[3px] block">
          <path d="M2 1.5V22.5L18 12Z" />
        </svg>
      </div>
      <div className="absolute left-[62px] top-[824px] flex h-[346px] w-[1697px] overflow-hidden">
        <SidePanel />
        <MapPane />
      </div>
      <Connectors />
    </div>
  );
}
